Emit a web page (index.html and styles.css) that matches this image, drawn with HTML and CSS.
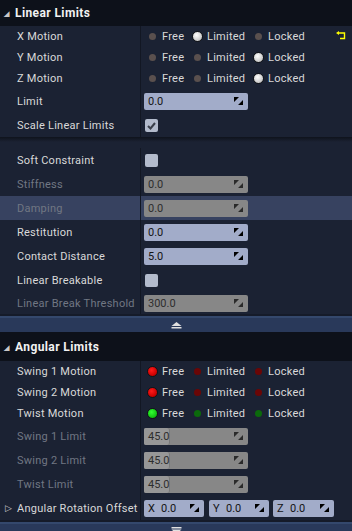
FILE: index.html
```html
<html>
	<head>
		<title>Linear Limits</title>
	<link rel="stylesheet" href="styles.css">
	</head>
	<body>
		<div class="panel">
			<div class="cat cat-first">
				<span class="tri">&#9698;</span>Linear Limits
			</div>

			<div class="row short">
				<div class="name">X Motion</div>
				<div class="value">
					<span class="radio"><i class="dot"></i>Free</span>
					<span class="radio"><i class="dot on"></i>Limited</span>
					<span class="radio"><i class="dot"></i>Locked</span>
					<svg class="reset" width="10" height="9" viewBox="0 0 10 9"><path d="M0 2 L3 0 L3 4 Z" fill="#ffff00"/><path d="M3 2 H8.5 V7.5 H4" stroke="#ffff00" stroke-width="1.4" fill="none"/></svg>
				</div>
			</div>
			<div class="row short">
				<div class="name">Y Motion</div>
				<div class="value">
					<span class="radio"><i class="dot"></i>Free</span>
					<span class="radio"><i class="dot"></i>Limited</span>
					<span class="radio"><i class="dot on"></i>Locked</span>
				</div>
			</div>
			<div class="row short">
				<div class="name">Z Motion</div>
				<div class="value">
					<span class="radio"><i class="dot"></i>Free</span>
					<span class="radio"><i class="dot"></i>Limited</span>
					<span class="radio"><i class="dot on"></i>Locked</span>
				</div>
			</div>
			<div class="row">
				<div class="name">Limit</div>
				<div class="value">
					<div class="field">0.0<svg class="drag" width="9" height="8" viewBox="0 0 9 8"><path d="M0 0 H5 L0 5 Z M9 8 H4 L9 3 Z" fill="#000"/></svg></div>
				</div>
			</div>
			<div class="row">
				<div class="name">Scale Linear Limits</div>
				<div class="value">
					<div class="check"><svg width="13" height="13" viewBox="0 0 13 13"><path d="M3 7 L5.5 9.5 L10 4" stroke="#3a3f4a" stroke-width="2" fill="none"/></svg></div>
				</div>
			</div>

			<div class="spacer"></div>

			<div class="row">
				<div class="name">Soft Constraint</div>
				<div class="value"><div class="check"></div></div>
			</div>
			<div class="row">
				<div class="name off">Stiffness</div>
				<div class="value">
					<div class="field grey">0.0<svg class="drag" width="9" height="8" viewBox="0 0 9 8"><path d="M0 0 H5 L0 5 Z M9 8 H4 L9 3 Z" fill="#2a2a2a"/></svg></div>
				</div>
			</div>
			<div class="row hover">
				<div class="name off">Damping</div>
				<div class="value">
					<div class="field grey">0.0<svg class="drag" width="9" height="8" viewBox="0 0 9 8"><path d="M0 0 H5 L0 5 Z M9 8 H4 L9 3 Z" fill="#2a2a2a"/></svg></div>
				</div>
			</div>
			<div class="row">
				<div class="name">Restitution</div>
				<div class="value">
					<div class="field">0.0<svg class="drag" width="9" height="8" viewBox="0 0 9 8"><path d="M0 0 H5 L0 5 Z M9 8 H4 L9 3 Z" fill="#000"/></svg></div>
				</div>
			</div>
			<div class="row">
				<div class="name">Contact Distance</div>
				<div class="value">
					<div class="field">5.0<svg class="drag" width="9" height="8" viewBox="0 0 9 8"><path d="M0 0 H5 L0 5 Z M9 8 H4 L9 3 Z" fill="#000"/></svg></div>
				</div>
			</div>
			<div class="row">
				<div class="name">Linear Breakable</div>
				<div class="value"><div class="check"></div></div>
			</div>
			<div class="row last">
				<div class="name off">Linear Break Threshold</div>
				<div class="value">
					<div class="field grey">300.0<svg class="drag" width="9" height="8" viewBox="0 0 9 8"><path d="M0 0 H5 L0 5 Z M9 8 H4 L9 3 Z" fill="#2a2a2a"/></svg></div>
				</div>
			</div>

			<div class="fold">
				<svg width="11" height="7" viewBox="0 0 11 7"><path d="M5.5 0 L10.5 4 H0.5 Z" fill="#e0e0e0"/><rect x="0.5" y="5" width="10" height="1.5" fill="#e0e0e0"/></svg>
			</div>

			<div class="cat">
				<span class="tri">&#9698;</span>Angular Limits
			</div>

			<div class="row short">
				<div class="name">Swing 1 Motion</div>
				<div class="value">
					<span class="radio"><i class="dot red on"></i>Free</span>
					<span class="radio"><i class="dot red"></i>Limited</span>
					<span class="radio"><i class="dot red"></i>Locked</span>
				</div>
			</div>
			<div class="row short">
				<div class="name">Swing 2 Motion</div>
				<div class="value">
					<span class="radio"><i class="dot red on"></i>Free</span>
					<span class="radio"><i class="dot red"></i>Limited</span>
					<span class="radio"><i class="dot red"></i>Locked</span>
				</div>
			</div>
			<div class="row short">
				<div class="name">Twist Motion</div>
				<div class="value">
					<span class="radio"><i class="dot green on"></i>Free</span>
					<span class="radio"><i class="dot green"></i>Limited</span>
					<span class="radio"><i class="dot green"></i>Locked</span>
				</div>
			</div>
			<div class="row">
				<div class="name off">Swing 1 Limit</div>
				<div class="value">
					<div class="field grey slider"><span class="fill">45.0</span><svg class="drag" width="9" height="8" viewBox="0 0 9 8"><path d="M0 0 H5 L0 5 Z M9 8 H4 L9 3 Z" fill="#2a2a2a"/></svg></div>
				</div>
			</div>
			<div class="row">
				<div class="name off">Swing 2 Limit</div>
				<div class="value">
					<div class="field grey slider"><span class="fill">45.0</span><svg class="drag" width="9" height="8" viewBox="0 0 9 8"><path d="M0 0 H5 L0 5 Z M9 8 H4 L9 3 Z" fill="#2a2a2a"/></svg></div>
				</div>
			</div>
			<div class="row">
				<div class="name off">Twist Limit</div>
				<div class="value">
					<div class="field grey slider"><span class="fill">45.0</span><svg class="drag" width="9" height="8" viewBox="0 0 9 8"><path d="M0 0 H5 L0 5 Z M9 8 H4 L9 3 Z" fill="#2a2a2a"/></svg></div>
				</div>
			</div>
			<div class="row">
				<div class="name"><span class="expand">&#9655;</span>Angular Rotation Offset</div>
				<div class="value vec">
					<div class="field vx"><b>X</b>0.0<svg class="drag" width="9" height="8" viewBox="0 0 9 8"><path d="M0 0 H5 L0 5 Z M9 8 H4 L9 3 Z" fill="#000"/></svg></div>
					<div class="field vy"><b>Y</b>0.0<svg class="drag" width="9" height="8" viewBox="0 0 9 8"><path d="M0 0 H5 L0 5 Z M9 8 H4 L9 3 Z" fill="#000"/></svg></div>
					<div class="field vz"><b>Z</b>0.0<svg class="drag" width="9" height="8" viewBox="0 0 9 8"><path d="M0 0 H5 L0 5 Z M9 8 H4 L9 3 Z" fill="#000"/></svg></div>
				</div>
			</div>

			<div class="fold bottom">
				<svg width="11" height="7" viewBox="0 0 11 7"><rect x="0.5" y="0" width="10" height="1.5" fill="#e0e0e0"/><path d="M0.5 2.5 H10.5 L5.5 7 Z" fill="#e0e0e0"/></svg>
			</div>
		</div>
	</body>
</html>
```

FILE: styles.css
```css
body {
	margin: 0;
	background-color: #1b2233;
	font-family: Roboto, "Noto Sans", sans-serif;
	font-size: 11px;
	letter-spacing: 0.25px;
	color: #d9d9d9;
	overflow: hidden;
}

.panel {
	width: 352px;
	height: 531px;
	overflow: hidden;
}

.cat {
	height: 29px;
	display: flex;
	align-items: center;
	background-color: #0d111a;
	color: #f2f2f2;
	font-weight: bold;
	font-size: 12px;
	letter-spacing: 0.4px;
	padding-left: 4px;
}

.cat-first {
	height: 26px;
	padding-bottom: 1px;
	box-sizing: border-box;
}

.tri {
	font-size: 7px;
	color: #c8c8c8;
	width: 11px;
	margin-top: 2px;
}

.row {
	display: flex;
	height: 24px;
	align-items: center;
}

.row.short {
	height: 21px;
}

.row.last {
	height: 22px;
}

.row.hover {
	background-color: #374260;
}

.name {
	width: 123px;
	height: 100%;
	padding-left: 17px;
	border-right: 1px solid #121723;
	display: flex;
	align-items: center;
	white-space: nowrap;
	position: relative;
}

.name.off {
	color: #717783;
}

.expand {
	position: absolute;
	left: 5px;
	font-size: 9px;
	color: #d0d0d0;
}

.value {
	flex: 1;
	display: flex;
	align-items: center;
	padding-left: 3px;
	height: 100%;
}

.radio {
	display: flex;
	align-items: center;
	width: 45px;
}

.radio:nth-child(2) {
	width: 61px;
}

.radio:nth-child(3) {
	width: auto;
}

.dot {
	display: inline-block;
	width: 12px;
	height: 12px;
	margin-right: 4px;
	margin-left: 2px;
	position: relative;
}

.dot::after {
	content: "";
	position: absolute;
	left: 2.5px;
	top: 2.5px;
	width: 7px;
	height: 7px;
	border-radius: 50%;
	background-color: #5a504e;
}

.dot.on::after {
	left: 0.5px;
	top: 0.5px;
	width: 9px;
	height: 9px;
	border: 1px solid #121418;
	background: radial-gradient(circle at 40% 35%, #ffffff, #c4c4c4 75%);
}

.dot.red::after {
	background-color: #6a0606;
}

.dot.red.on::after {
	background: radial-gradient(circle at 40% 35%, #ff1a1a, #c80000 70%);
}

.dot.green::after {
	background-color: #0b6a0b;
}

.dot.green.on::after {
	background: radial-gradient(circle at 40% 35%, #33ff33, #10c010 70%);
}

.reset {
	margin-left: auto;
	margin-right: 6px;
	margin-bottom: 2px;
}

.field {
	width: 104px;
	height: 17px;
	box-sizing: border-box;
	border-radius: 2px;
	background-color: #a2acc9;
	color: #141414;
	letter-spacing: 0;
	padding-left: 4px;
	display: flex;
	align-items: center;
	position: relative;
}

.field.grey {
	background-color: #878787;
	color: #2e2e2e;
}

.drag {
	margin-left: auto;
	margin-right: 5px;
}

.slider {
	padding-left: 0;
}

.fill {
	height: 100%;
	width: 26px;
	padding-left: 4px;
	box-sizing: border-box;
	display: flex;
	align-items: center;
	background-color: #979797;
	border-right: 1px solid #7a7a7a;
	border-radius: 2px 3px 3px 2px;
}

.vec .field b {
	font-weight: normal;
	width: 13px;
}

.vx {
	width: 60px;
	margin-right: 5px;
}

.vy {
	width: 60px;
	margin-right: 4px;
}

.vz {
	width: 61px;
}

.check {
	width: 13px;
	height: 13px;
	margin-left: 1px;
	border-radius: 2px;
	background-color: #b3bbcc;
}

.check svg {
	display: block;
}

.spacer {
	height: 11px;
	background: linear-gradient(#0f131c, #1b2233 5px);
}

.fold {
	height: 16px;
	margin-top: 2px;
	background-color: #29395a;
	border-top: 2px solid #34486c;
	box-sizing: border-box;
	display: flex;
	justify-content: center;
	align-items: center;
	box-shadow: 0 -2px 0 #151b29;
}

.fold.bottom {
	height: 12px;
	align-items: flex-start;
	padding-top: 3px;
}
```
